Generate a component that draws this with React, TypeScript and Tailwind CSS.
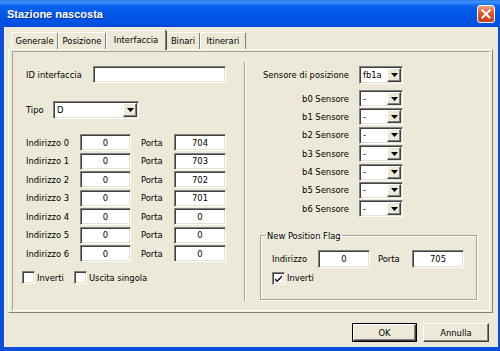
import React from 'react';

const sunken =
  'border border-t-[#808080] border-l-[#808080] border-b-white border-r-white shadow-[inset_1px_1px_0_#404040,inset_-1px_-1px_0_#e4e1d4]';
const raised =
  'border border-t-white border-l-white border-b-[#404040] border-r-[#404040] shadow-[inset_-1px_-1px_0_#808080]';

const Arrow = () => (
  <svg width="7" height="4" viewBox="0 0 7 4">
    <path d="M0 0h7L3.5 4z" fill="#000" />
  </svg>
);

const Field = ({ value = '', className }: { value?: string; className: string }) => (
  <div className={`flex items-center justify-center bg-white ${sunken} ${className}`}>{value}</div>
);

const Combo = ({ value, className }: { value: string; className: string }) => (
  <div className={`flex bg-white p-[1px] ${sunken} ${className}`}>
    <span className="flex flex-1 items-center pl-[2px]">{value}</span>
    <span className={`flex w-[14px] items-center justify-center bg-[#ece9d8] ${raised}`}>
      <Arrow />
    </span>
  </div>
);

const Check = ({ checked = false, label }: { checked?: boolean; label: string }) => (
  <div className="flex items-center">
    <span className={`flex h-[13px] w-[13px] items-center justify-center bg-white ${sunken}`}>
      {checked && (
        <svg width="9" height="9" viewBox="0 0 9 9">
          <path d="M1 4l2 2.2L8 1.2v2L3 8.2 1 6z" fill="#000" />
        </svg>
      )}
    </span>
    <span className="ml-[2px]">{label}</span>
  </div>
);

const tabs = [
  { name: 'Generale', w: 'w-[47px]' },
  { name: 'Posizione', w: 'w-[48px]' },
  { name: 'Interfaccia', w: 'w-[60px]', active: true },
  { name: 'Binari', w: 'w-[34px]' },
  { name: 'Itinerari', w: 'w-[46px]' },
];

const addresses = ['704', '703', '702', '701', '0', '0', '0'];

export default function App() {
  return (
    <div className="flex h-[351px] w-[500px] flex-col bg-[#0a4fdc] font-['DejaVu_Sans_Condensed','Liberation_Sans',Arial,sans-serif] text-[9.3px] text-black">
      {/* title bar */}
      <div className="flex h-[27px] justify-between bg-[linear-gradient(to_bottom,#2a7af2_0%,#3d8ff8_8%,#0a62ee_22%,#0056e6_55%,#0052e2_85%,#0049d4_100%)] pl-[7px] pr-[5px]">
        <span className="pt-[6px] font-['Liberation_Sans',Arial,sans-serif] text-[11px] font-bold text-white [text-shadow:1px_1px_0_#0a2f9c]">
          Stazione nascosta
        </span>
        <button className="mt-[5px] flex h-[18px] w-[18px] items-center justify-center rounded-[3px] border border-white bg-[linear-gradient(to_bottom,#f0a080,#d9582f_45%,#c4401c)]">
          <svg width="10" height="10" viewBox="0 0 10 10">
            <path d="M1.5 1.5l7 7M8.5 1.5l-7 7" stroke="#fff" strokeWidth="2" strokeLinecap="square" />
          </svg>
        </button>
      </div>

      {/* body */}
      <div className="mb-[4px] ml-[4px] mr-[2px] flex flex-1 flex-col bg-[#ece9d8] pt-[3px] shadow-[inset_1px_0_0_#f6f4ec]">
        {/* tabs */}
        <div className="ml-[4px] flex h-[19px] items-end pl-[3px]">
          {tabs.map((t) =>
            t.active ? (
              <div
                key={t.name}
                className={`relative z-10 -mb-px flex h-[20px] ${t.w} items-start justify-center rounded-t-[2px] border-l border-r border-t border-l-white border-r-[#808080] border-t-white bg-[#ece9d8] pt-[2px] shadow-[1px_0_0_#404040]`}
              >
                {t.name}
              </div>
            ) : (
              <div
                key={t.name}
                className={`flex h-[17px] ${t.w} items-center justify-center rounded-t-[2px] border-l border-r border-t border-l-white border-r-[#808080] border-t-white`}
              >
                {t.name}
              </div>
            ),
          )}
        </div>

        {/* panel */}
        <div className="ml-[4px] flex h-[264px] w-[485px] border border-b-[#808080] border-l-white border-r-[#808080] border-t-white pb-[1px] pl-[3px] pr-[2px] pt-[1px]">
          <div className="flex flex-1 border border-b-white border-l-[#a7a496] border-r-white border-t-[#a7a496]">
            {/* left column */}
            <div className="flex w-[231px] flex-col pl-[13px]">
              <div className="mt-[14px] flex h-[17px] items-center">
                <span className="w-[67px]">ID interfaccia</span>
                <Field className="h-[17px] w-[133px]" />
              </div>
              <div className="mt-[18px] flex h-[18px] items-center">
                <span className="w-[27px]">Tipo</span>
                <Combo value="D" className="h-[18px] w-[86px]" />
              </div>
              <div className="mt-[15px] flex flex-col gap-[1.5px]">
                {addresses.map((port, i) => (
                  <div key={i} className="flex h-[17px] items-center">
                    <span className="w-[54px]">Indirizzo {i}</span>
                    <Field value="0" className="h-[17px] w-[51px]" />
                    <span className="ml-[10px] w-[33px]">Porta</span>
                    <Field value={port} className="h-[17px] w-[52px]" />
                  </div>
                ))}
              </div>
              <div className="-ml-[4px] mt-[9px] flex gap-[10px]">
                <Check label="Inverti" />
                <Check label="Uscita singola" />
              </div>
            </div>

            {/* separator */}
            <div className="mb-[9px] mt-[10px] w-[2px] border-l border-r border-l-[#a7a496] border-r-white" />

            {/* right column */}
            <div className="flex flex-1 flex-col">
              <div className="mt-[14px] flex h-[18px] items-center">
                <span className="w-[103px] text-right">Sensore di posizione</span>
                <Combo value="fb1a" className="ml-[10px] h-[18px] w-[44px]" />
              </div>
              <div className="mt-[6px] flex flex-col gap-[1.4px]">
                {[0, 1, 2, 3, 4, 5, 6].map((n) => (
                  <div key={n} className="flex h-[17px] items-center">
                    <span className="w-[103px] text-right">b{n} Sensore</span>
                    <Combo value="-" className="ml-[10px] h-[17px] w-[44px]" />
                  </div>
                ))}
              </div>
              <fieldset className="ml-[14px] mt-[12.6px] h-[70px] w-[217px] border border-[#a7a496] p-0 shadow-[inset_1px_1px_0_#fff,1px_1px_0_#fff]">
                <legend className="ml-[5px] px-[1px] leading-[12px]">New Position Flag</legend>
                <div className="flex flex-col pl-[11px]">
                  <div className="mt-[8px] flex h-[18px] items-center">
                    <span className="w-[46px]">Indirizzo</span>
                    <Field value="0" className="h-[18px] w-[52px]" />
                    <span className="ml-[8px] w-[34px]">Porta</span>
                    <Field value="705" className="h-[18px] w-[52px]" />
                  </div>
                  <div className="mt-[3.5px]">
                    <Check checked label="Inverti" />
                  </div>
                </div>
              </fieldset>
            </div>
          </div>
        </div>

        {/* buttons */}
        <div className="mt-[10px] flex justify-end gap-[6px] pr-[9px]">
          <button className="h-[19px] w-[65px] border border-black bg-[#ece9d8] p-0">
            <span className={`flex h-full w-full items-center justify-center ${raised}`}>OK</span>
          </button>
          <button className={`flex h-[19px] w-[66px] items-center justify-center bg-[#ece9d8] ${raised}`}>
            Annulla
          </button>
        </div>
      </div>
    </div>
  );
}
